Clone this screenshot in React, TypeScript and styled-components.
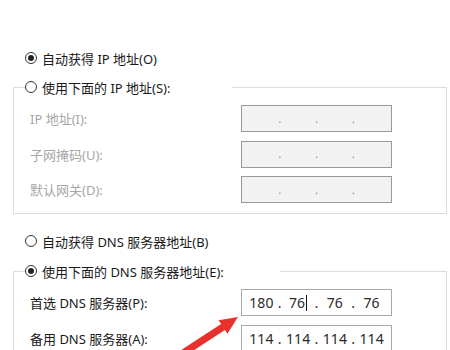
import React from "react";
import styled, { createGlobalStyle } from "styled-components";

const GlobalStyle = createGlobalStyle`
  html, body {
    margin: 0;
    padding: 0;
    overflow: hidden;
    background: #ffffff;
  }
  body {
    font-family: "Noto Sans", "Noto Sans CJK SC", sans-serif;
    font-size: 13px;
    color: #1a1a1a;
  }
`;

const Page = styled.div`
  position: relative;
  width: 450px;
  height: 350px;
  box-sizing: border-box;
  padding: 49px 3px 0 13px;
`;

const RadioRow = styled.div<{ $top?: number }>`
  display: flex;
  align-items: center;
  gap: 5px;
  height: 18px;
  padding-left: 12px;
  margin-top: ${(p) => p.$top ?? 0}px;
  white-space: nowrap;
`;

const Radio = styled.span<{ $checked?: boolean }>`
  position: relative;
  display: inline-block;
  flex: none;
  width: 12px;
  height: 12px;
  box-sizing: border-box;
  border: 1px solid #333333;
  border-radius: 50%;
  background: #ffffff;

  &::after {
    content: "";
    display: ${(p) => (p.$checked ? "block" : "none")};
    position: absolute;
    left: 2px;
    top: 2px;
    width: 6px;
    height: 6px;
    border-radius: 50%;
    background: #222222;
  }
`;

const Group = styled.fieldset<{ $top: number }>`
  margin: ${(p) => p.$top}px 0 0 0;
  padding: 9px 0 10px 16px;
  border: 1px solid #dcdcdc;
  display: flex;
  flex-direction: column;
  gap: 8.5px;
  min-width: 0;
`;

const Legend = styled.legend<{ $width: number }>`
  display: flex;
  align-items: center;
  gap: 5px;
  width: ${(p) => p.$width}px;
  height: 18px;
  padding: 0;
  margin-left: -5px;
  white-space: nowrap;
`;

const FieldRow = styled.div`
  display: grid;
  grid-template-columns: 211px 151px;
  align-items: center;
  height: 27px;
`;

const Label = styled.span<{ $disabled?: boolean }>`
  color: ${(p) => (p.$disabled ? "#a6a6a6" : "#1a1a1a")};
  white-space: nowrap;
`;

const IpBox = styled.div<{ $disabled?: boolean }>`
  display: flex;
  align-items: center;
  height: 27px;
  box-sizing: border-box;
  padding: 0 3px;
  border: 1px solid ${(p) => (p.$disabled ? "#9a9a9a" : "#a8a8a8")};
  background: ${(p) => (p.$disabled ? "#f2f2f2" : "#ffffff")};
  font-size: 14px;
  color: #2a2a2a;
`;

const Octet = styled.span`
  position: relative;
  flex: 1;
  text-align: center;
`;

const Dot = styled.span<{ $disabled?: boolean }>`
  flex: none;
  width: 4px;
  text-align: center;
  color: ${(p) => (p.$disabled ? "#777777" : "#2a2a2a")};
  font-size: ${(p) => (p.$disabled ? "10px" : "14px")};
`;

const Caret = styled.span`
  display: inline-block;
  width: 1px;
  height: 16px;
  margin-left: 1px;
  background: #111111;
  vertical-align: -3px;
`;

const Arrow = styled.svg`
  position: absolute;
  left: 0;
  top: 0;
  pointer-events: none;
`;

type IpProps = { values?: string[]; caretAt?: number };

const IpField = ({ values, caretAt }: IpProps) => {
  const disabled = !values;
  const parts = values ?? ["", "", "", ""];
  return (
    <IpBox $disabled={disabled}>
      {parts.map((v, i) => (
        <React.Fragment key={i}>
          {i > 0 && <Dot $disabled={disabled}>.</Dot>}
          <Octet>
            {v}
            {caretAt === i && <Caret />}
          </Octet>
        </React.Fragment>
      ))}
    </IpBox>
  );
};

export default function App() {
  return (
    <>
      <GlobalStyle />
      <Page>
        <RadioRow>
          <Radio $checked />
          <span>自动获得 IP 地址(O)</span>
        </RadioRow>

        <Group $top={11}>
          <Legend $width={207}>
            <Radio />
            <span>使用下面的 IP 地址(S):</span>
          </Legend>
          <FieldRow>
            <Label $disabled>IP 地址(I):</Label>
            <IpField />
          </FieldRow>
          <FieldRow>
            <Label $disabled>子网掩码(U):</Label>
            <IpField />
          </FieldRow>
          <FieldRow>
            <Label $disabled>默认网关(D):</Label>
            <IpField />
          </FieldRow>
        </Group>

        <RadioRow $top={18}>
          <Radio />
          <span>自动获得 DNS 服务器地址(B)</span>
        </RadioRow>

        <Group $top={12}>
          <Legend $width={255}>
            <Radio $checked />
            <span>使用下面的 DNS 服务器地址(E):</span>
          </Legend>
          <FieldRow>
            <Label>首选 DNS 服务器(P):</Label>
            <IpField values={["180", "76", "76", "76"]} caretAt={1} />
          </FieldRow>
          <FieldRow>
            <Label>备用 DNS 服务器(A):</Label>
            <IpField values={["114", "114", "114", "114"]} />
          </FieldRow>
        </Group>

        <Arrow width="450" height="350" viewBox="0 0 450 350">
          <polygon
            points="238,317 227.4,333.7 224.9,329.9 179,360 175,354 221.1,324.1 218.6,320.3"
            fill="#e8312d"
          />
        </Arrow>
      </Page>
    </>
  );
}
